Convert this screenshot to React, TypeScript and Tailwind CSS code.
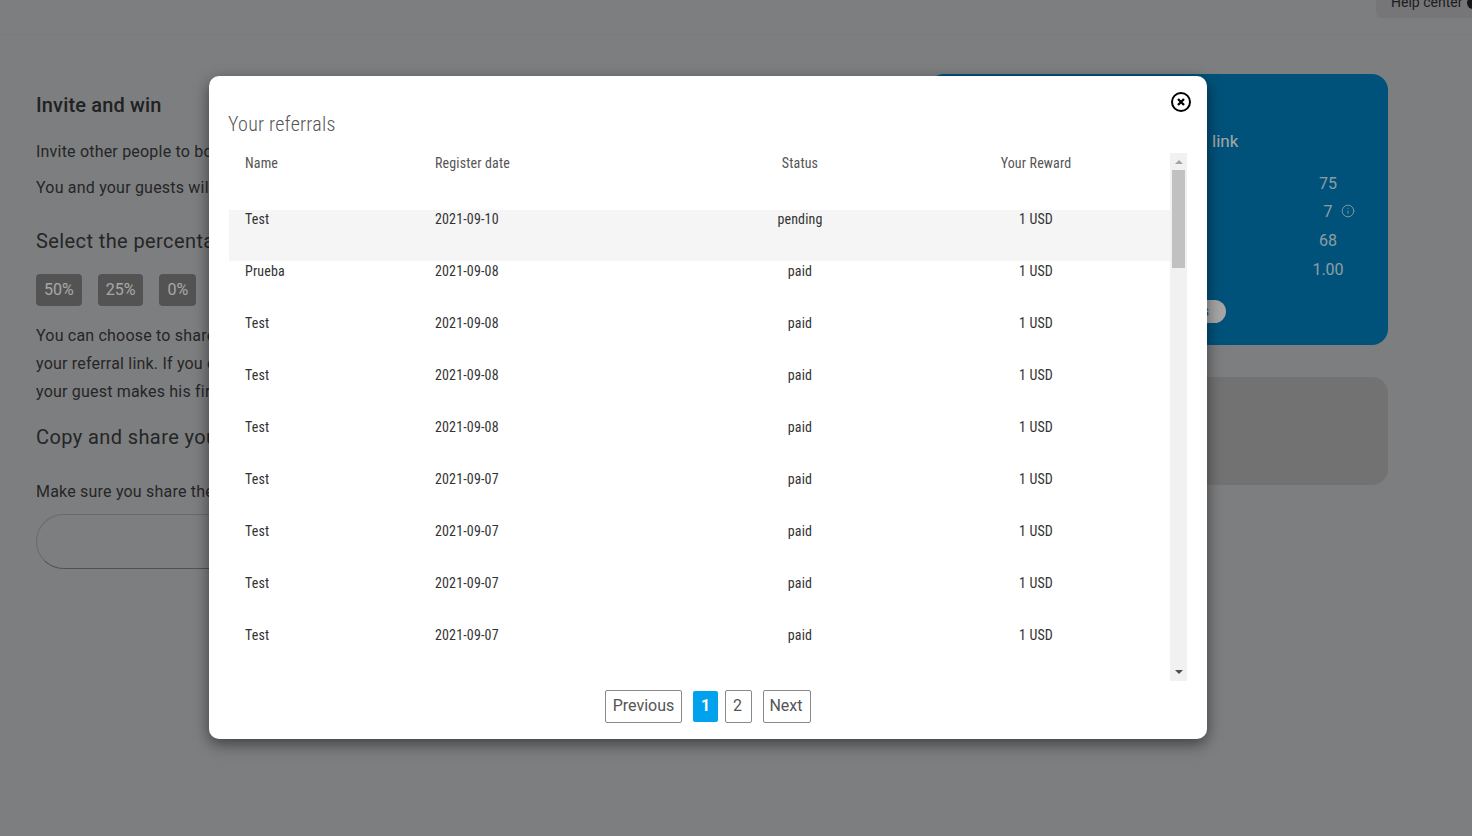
import { Info } from 'lucide-react'

const rows = [
  { name: 'Test', date: '2021-09-10', status: 'pending' },
  { name: 'Prueba', date: '2021-09-08', status: 'paid' },
  { name: 'Test', date: '2021-09-08', status: 'paid' },
  { name: 'Test', date: '2021-09-08', status: 'paid' },
  { name: 'Test', date: '2021-09-08', status: 'paid' },
  { name: 'Test', date: '2021-09-07', status: 'paid' },
  { name: 'Test', date: '2021-09-07', status: 'paid' },
  { name: 'Test', date: '2021-09-07', status: 'paid' },
  { name: 'Test', date: '2021-09-07', status: 'paid' },
]

const stats = [
  { value: '75', info: false },
  { value: '7', info: true },
  { value: '68', info: false },
  { value: '1.00', info: false },
]

function App() {
  return (
    <div className="relative h-[836px] overflow-hidden bg-[#c0c2c5] font-['Roboto',sans-serif]">
      <header className="flex h-[35px] justify-end overflow-hidden border-b border-[#bbbdc0] pl-4">
        <div className="flex h-[18px] w-[96px] items-start gap-[5px] overflow-hidden rounded-bl-md bg-[#b5b6b8] pl-[15px]">
          <span className="-mt-[8px] whitespace-nowrap text-[14px] leading-5 text-[#2f2f2f]">Help center</span>
          <span className="-mt-[3px] h-3 w-3 shrink-0 rounded-full bg-[#222]" />
        </div>
      </header>

      <main className="flex pl-9 pr-[84px] pt-[39px]">
        <section className="min-w-0 flex-1 whitespace-nowrap text-[16px] tracking-[0.2px] text-[#3a3a3a]">
          <h1 className="mt-[19px] text-[20px] font-medium leading-6 tracking-[0.15px] text-[#333]">Invite and win</h1>
          <p className="mt-[23px] leading-6">Invite other people to book</p>
          <p className="mt-3 leading-6">You and your guests will win</p>
          <h2 className="mt-[27px] text-[20px] leading-7 tracking-[0.4px]">Select the percentage</h2>
          <div className="mt-[19px] flex gap-4 tracking-normal">
            <span className="rounded bg-[#808080] px-2 py-[5px] leading-[22px] text-white">50%</span>
            <span className="rounded bg-[#808080] px-2 py-[5px] leading-[22px] text-white">25%</span>
            <span className="rounded bg-[#808080] px-2 py-[5px] leading-[22px] text-white">0%</span>
          </div>
          <div className="mt-[16px] leading-7">
            <p>You can choose to share</p>
            <p>your referral link. If you can</p>
            <p>your guest makes his first</p>
          </div>
          <h2 className="mt-[17px] text-[20px] leading-7 tracking-[0.4px]">Copy and share your link</h2>
          <p className="mt-[29px] leading-6">Make sure you share the</p>
          <div className="mt-[10px] h-[55px] w-[500px] rounded-full border border-[#a0a4b0] border-b-[#7a7e88]" />
        </section>

        <aside className="flex w-[460px] flex-col gap-8">
          <div className="h-[271px] rounded-2xl bg-[#007ebc] pl-[284px] pr-[18px] pt-[55px] text-[16px] text-white">
            <p className="text-[17px] leading-6">link</p>
            <div className="mt-[15px] flex flex-col items-end">
              {stats.map((s, i) => (
                <div
                  key={s.value}
                  className={i === 0
                    ? 'flex h-[29px] w-[100px] items-center justify-center pl-[16px] pt-[2px] text-[#dceefc]'
                    : 'relative flex h-[29px] w-[100px] items-center justify-center pl-[16px] text-[#dceefc]'}
                >
                  <span>{s.value}</span>
                  {s.info && <Info className="absolute right-[15px] top-[7px] h-[14px] w-[14px]" strokeWidth={1.5} />}
                </div>
              ))}
            </div>
            <div className="-ml-[120px] mt-[16px] flex h-[23px] w-[134px] items-center justify-end rounded-full bg-white pr-[17px] text-[14px] text-[#007ebc]">
              Invitations
            </div>
          </div>
          <div className="h-[108px] rounded-2xl bg-[#b0b0b0]" />
        </aside>
      </main>

      <div className="absolute inset-0 bg-black/35 pl-[209px] pt-[76px]">
        <div className="relative flex h-[663px] w-[998px] flex-col rounded-[10px] bg-white px-[20px] shadow-[0_5px_15px_rgba(0,0,0,0.5)]">
          <button className="absolute right-[15px] top-[15px]">
            <svg width="22" height="22" viewBox="0 0 22 22" fill="none" stroke="#000">
              <circle cx="11" cy="11" r="9" strokeWidth="2" />
              <path d="M8 8l6 6M14 8l-6 6" strokeWidth="2.3" />
            </svg>
          </button>

          <h2 className="-ml-px mt-[36px] text-[20px] font-light leading-6 tracking-[0.25px] text-[#555] [font-stretch:75%]">Your referrals</h2>

          <div className="mt-[17px] flex h-[528px] overflow-hidden">
            <table className="h-fit w-[941px] table-fixed text-[14px] tracking-[0.15px] text-[#333] [font-stretch:75%]">
              <colgroup>
                <col className="w-[190px]" />
                <col className="w-[279px]" />
                <col className="w-[204px]" />
                <col className="w-[268px]" />
              </colgroup>
              <thead>
                <tr className="h-[57px] align-top text-[#555]">
                  <th className="px-4 text-left font-normal leading-5">Name</th>
                  <th className="px-4 text-left font-normal leading-5">Register date</th>
                  <th className="text-center font-normal leading-5">Status</th>
                  <th className="text-center font-normal leading-5">Your Reward</th>
                </tr>
              </thead>
              <tbody>
                {rows.map((r, i) => (
                  <tr key={i} className={i === 0 ? 'h-[51px] bg-[#f5f5f5] align-top' : 'h-[52px] align-top'}>
                    <td className="px-4 leading-5"><div className={i === 0 ? '-mt-px' : ''}>{r.name}</div></td>
                    <td className="px-4 leading-5"><div className={i === 0 ? '-mt-px' : ''}>{r.date}</div></td>
                    <td className="text-center leading-5"><div className={i === 0 ? '-mt-px' : ''}>{r.status}</div></td>
                    <td className="text-center leading-5"><div className={i === 0 ? '-mt-px' : ''}>1 USD</div></td>
                  </tr>
                ))}
              </tbody>
            </table>

            <div className="flex w-[17px] shrink-0 flex-col items-center bg-[#f1f1f1]">
              <div className="mt-[7px] h-0 w-0 border-x-[4px] border-b-[4px] border-x-transparent border-b-[#a3a3a3]" />
              <div className="mt-[6px] h-[98px] w-[13px] bg-[#c1c1c1]" />
              <div className="mb-[7px] mt-auto h-0 w-0 border-x-[4px] border-t-[4px] border-x-transparent border-t-[#505050]" />
            </div>
          </div>

          <nav className="mt-[9px] flex items-center justify-center text-[16px] text-[#555]">
            <button className="h-[33px] w-[77px] rounded-[2px] border border-[#8a8a8a] pb-[2px]">Previous</button>
            <button className="ml-[11px] h-[31px] w-[25px] rounded-[2px] bg-[#00a2ed] pb-[2px] font-bold text-white">1</button>
            <button className="ml-[7px] h-[33px] w-[27px] rounded-[2px] border border-[#8a8a8a] pb-[2px] pr-[2px]">2</button>
            <button className="ml-[11px] h-[33px] w-[48px] rounded-[2px] border border-[#8a8a8a] pb-[2px] pr-[2px]">Next</button>
          </nav>
        </div>
      </div>
    </div>
  )
}

export default App
